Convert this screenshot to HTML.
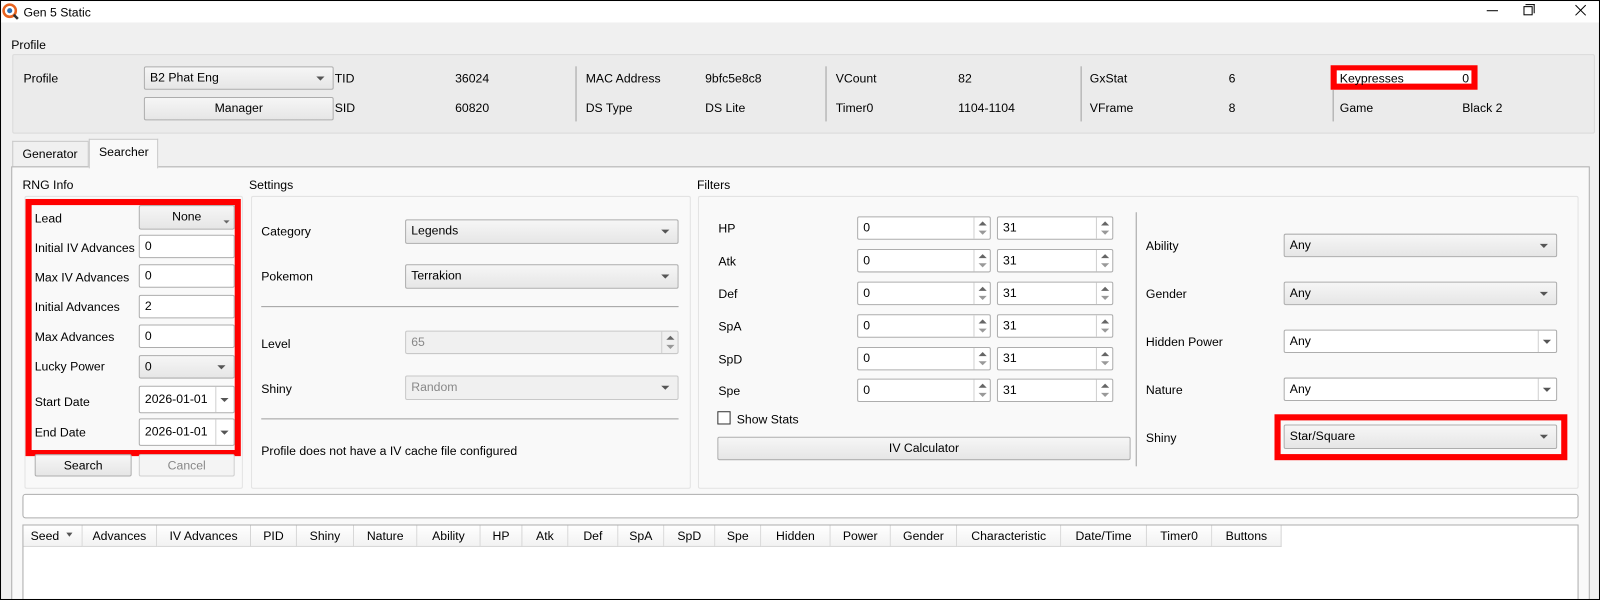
<!DOCTYPE html>
<html><head><meta charset="utf-8"><style>
*{box-sizing:border-box;margin:0;padding:0}
body{width:1600px;height:600px;position:relative;overflow:hidden;background:#f0f0f0;font-family:"Liberation Sans",sans-serif;font-size:12px;color:#000}
#s{position:absolute;left:0;top:0;width:1568px;height:588px;overflow:hidden;transform:scale(1.020408);transform-origin:0 0}
.a{position:absolute}
.t{position:absolute;line-height:14px;white-space:nowrap}
.cb{position:absolute;border:1px solid #adadad;border-radius:2px;background:linear-gradient(#f6f6f6,#e6e6e6);padding-left:5px;line-height:20px}
.cb:after{content:"";position:absolute;right:8px;top:50%;margin-top:-2px;border-left:4px solid transparent;border-right:4px solid transparent;border-top:4px solid #555}
.ed{position:absolute;border:1px solid #adadad;border-radius:2px;background:#fff;padding-left:5px;line-height:20px}
.ed.dd:before{content:"";position:absolute;right:17px;top:0;bottom:0;border-left:1px solid #d0d0d0}
.ed.dd:after{content:"";position:absolute;right:5px;top:50%;margin-top:-2px;border-left:4px solid transparent;border-right:4px solid transparent;border-top:4px solid #555}
.sp{position:absolute;border:1px solid #adadad;border-radius:2px;background:#fff;padding-left:5px;line-height:20px}
.sp i{position:absolute;right:0;top:0;bottom:0;width:16px;border-left:1px solid #d0d0d0}
.sp i:before{content:"";position:absolute;left:4px;top:4px;border-left:4px solid transparent;border-right:4px solid transparent;border-bottom:4px solid #666}
.sp i:after{content:"";position:absolute;left:4px;bottom:4px;border-left:4px solid transparent;border-right:4px solid transparent;border-top:4px solid #999}
.bt{position:absolute;border:1px solid #adadad;border-radius:2px;background:linear-gradient(#f6f6f6,#e6e6e6);text-align:center;line-height:20px}
.gb{position:absolute;border:1px solid #e3e3e3;border-radius:2px}
.vs{position:absolute;width:1px;background:#a0a0a0}
.hr{position:absolute;height:1px;background:#a0a0a0}
.red{position:absolute;border:6px solid #f00}
.th{position:absolute;top:0;height:21px;line-height:20px;text-align:center;border-right:1px solid #d5d5d5;border-bottom:1px solid #d5d5d5;background:linear-gradient(#fff,#f2f2f2)}
</style></head><body><div id="s">
<div class="a" style="left:0;top:0;width:1568px;height:22px;background:#fff"></div>
<svg class="a" style="left:2px;top:3px" width="17" height="17" viewBox="0 0 17 17"><circle cx="7.5" cy="7.5" r="6" fill="#fff" stroke="#e8631f" stroke-width="2.5"/><circle cx="7.5" cy="7.5" r="2.5" fill="#2a6fb5"/><line x1="11.5" y1="11.5" x2="15.5" y2="15.5" stroke="#333" stroke-width="2.5"/></svg>
<div class="t" style="left:23px;top:5px">Gen 5 Static</div>
<div class="a" style="left:1457px;top:10px;width:11px;height:1px;background:#000"></div>
<div class="a" style="left:1493px;top:6px;width:9px;height:9px;border:1px solid #000;background:#fff"></div>
<div class="a" style="left:1495px;top:4px;width:9px;height:9px;border-top:1px solid #000;border-right:1px solid #000"></div>
<svg class="a" style="left:1543px;top:4px" width="12" height="12"><path d="M1 1L11 11M11 1L1 11" stroke="#000" stroke-width="1"/></svg>

<div class="t" style="left:11px;top:37px">Profile</div>
<div class="gb" style="left:12px;top:53px;width:1551px;height:78px;background:#ebebeb;border-color:#dadada"></div>
<div class="t" style="left:23px;top:70px">Profile</div>
<div class="cb" style="left:141px;top:65px;width:186px;height:23px">B2 Phat Eng</div>
<div class="bt" style="left:141px;top:95px;width:186px;height:23px">Manager</div>
<div class="t" style="left:328px;top:70px">TID</div><div class="t" style="left:446px;top:70px">36024</div>
<div class="t" style="left:328px;top:99px">SID</div><div class="t" style="left:446px;top:99px">60820</div>
<div class="vs" style="left:564px;top:65px;height:54px"></div>
<div class="t" style="left:574px;top:70px">MAC Address</div><div class="t" style="left:691px;top:70px">9bfc5e8c8</div>
<div class="t" style="left:574px;top:99px">DS Type</div><div class="t" style="left:691px;top:99px">DS Lite</div>
<div class="vs" style="left:809px;top:65px;height:54px"></div>
<div class="t" style="left:819px;top:70px">VCount</div><div class="t" style="left:939px;top:70px">82</div>
<div class="t" style="left:819px;top:99px">Timer0</div><div class="t" style="left:939px;top:99px">1104-1104</div>
<div class="vs" style="left:1059px;top:65px;height:54px"></div>
<div class="t" style="left:1068px;top:70px">GxStat</div><div class="t" style="left:1204px;top:70px">6</div>
<div class="t" style="left:1068px;top:99px">VFrame</div><div class="t" style="left:1204px;top:99px">8</div>
<div class="vs" style="left:1306px;top:88px;height:31px"></div>
<div class="t" style="left:1313px;top:99px">Game</div><div class="t" style="left:1433px;top:99px">Black 2</div>
<div class="a" style="left:1304px;top:64px;width:144px;height:24px;border:5px solid #f00;border-width:5px 6px 6px 6px;background:#fff"></div>
<div class="t" style="left:1313px;top:70px">Keypresses</div><div class="t" style="left:1433px;top:70px">0</div>

<div class="a" style="left:12px;top:138px;width:75px;height:25px;border:1px solid #c8c8c8;border-bottom:none;background:#f0f0f0"></div>
<div class="t" style="left:22px;top:144px">Generator</div>
<div class="a" style="left:11px;top:163px;width:1547px;height:440px;border:1px solid #adadad;background:#f9f9f9"></div>
<div class="a" style="left:87px;top:136px;width:68px;height:29px;border:1px solid #c8c8c8;border-bottom:none;background:#f9f9f9"></div>
<div class="t" style="left:97px;top:142px">Searcher</div>

<div class="t" style="left:22px;top:174px">RNG Info</div>
<div class="gb" style="left:24px;top:192px;width:214px;height:287px"></div>
<div class="red" style="left:25px;top:195px;width:211px;height:252px"></div>
<div class="t" style="left:34px;top:207px">Lead</div>
<div class="bt" style="left:136px;top:201px;width:94px;height:24px">None</div>
<div class="a" style="left:219px;top:216px;border-left:3px solid transparent;border-right:3px solid transparent;border-top:3px solid #666"></div>
<div class="t" style="left:34px;top:236px">Initial IV Advances</div><div class="ed" style="left:136px;top:230px;width:94px;height:23px">0</div>
<div class="t" style="left:34px;top:265px">Max IV Advances</div><div class="ed" style="left:136px;top:259px;width:94px;height:23px">0</div>
<div class="t" style="left:34px;top:294px">Initial Advances</div><div class="ed" style="left:136px;top:289px;width:94px;height:23px">2</div>
<div class="t" style="left:34px;top:323px">Max Advances</div><div class="ed" style="left:136px;top:318px;width:94px;height:23px">0</div>
<div class="t" style="left:34px;top:352px">Lucky Power</div><div class="cb" style="left:136px;top:348px;width:94px;height:23px">0</div>
<div class="t" style="left:34px;top:387px">Start Date</div><div class="ed dd" style="left:136px;top:378px;width:94px;height:27px;line-height:25px">2026-01-01</div>
<div class="t" style="left:34px;top:417px">End Date</div><div class="ed dd" style="left:136px;top:410px;width:94px;height:27px;line-height:25px">2026-01-01</div>
<div class="bt" style="left:34px;top:445px;width:95px;height:22px">Search</div>
<div class="bt" style="left:136px;top:445px;width:94px;height:22px;color:#888;background:#f4f4f4;border-color:#cfcfcf">Cancel</div>

<div class="t" style="left:244px;top:174px">Settings</div>
<div class="gb" style="left:246px;top:192px;width:431px;height:287px"></div>
<div class="t" style="left:256px;top:220px">Category</div><div class="cb" style="left:397px;top:215px;width:268px;height:24px">Legends</div>
<div class="t" style="left:256px;top:264px">Pokemon</div><div class="cb" style="left:397px;top:259px;width:268px;height:24px">Terrakion</div>
<div class="hr" style="left:256px;top:300px;width:409px"></div>
<div class="t" style="left:256px;top:330px">Level</div><div class="sp" style="left:397px;top:324px;width:268px;height:23px;background:#f0f0f0;color:#888;border-color:#c8c8c8">65<i></i></div>
<div class="t" style="left:256px;top:374px">Shiny</div><div class="cb" style="left:397px;top:368px;width:268px;height:24px;color:#888;background:#f0f0f0;border-color:#c8c8c8">Random</div>
<div class="hr" style="left:256px;top:410px;width:409px"></div>
<div class="t" style="left:256px;top:435px">Profile does not have a IV cache file configured</div>

<div class="t" style="left:683px;top:174px">Filters</div>
<div class="gb" style="left:684px;top:192px;width:863px;height:287px"></div>
<div class="t" style="left:704px;top:217px">HP</div><div class="sp" style="left:840px;top:212px;width:131px;height:23px">0<i></i></div><div class="sp" style="left:977px;top:212px;width:114px;height:23px">31<i></i></div>
<div class="t" style="left:704px;top:249px">Atk</div><div class="sp" style="left:840px;top:244px;width:131px;height:23px">0<i></i></div><div class="sp" style="left:977px;top:244px;width:114px;height:23px">31<i></i></div>
<div class="t" style="left:704px;top:281px">Def</div><div class="sp" style="left:840px;top:276px;width:131px;height:23px">0<i></i></div><div class="sp" style="left:977px;top:276px;width:114px;height:23px">31<i></i></div>
<div class="t" style="left:704px;top:313px">SpA</div><div class="sp" style="left:840px;top:308px;width:131px;height:23px">0<i></i></div><div class="sp" style="left:977px;top:308px;width:114px;height:23px">31<i></i></div>
<div class="t" style="left:704px;top:345px">SpD</div><div class="sp" style="left:840px;top:340px;width:131px;height:23px">0<i></i></div><div class="sp" style="left:977px;top:340px;width:114px;height:23px">31<i></i></div>
<div class="t" style="left:704px;top:376px">Spe</div><div class="sp" style="left:840px;top:371px;width:131px;height:23px">0<i></i></div><div class="sp" style="left:977px;top:371px;width:114px;height:23px">31<i></i></div>
<div class="a" style="left:703px;top:403px;width:13px;height:13px;border:1px solid #333;background:#fff"></div>
<div class="t" style="left:722px;top:404px">Show Stats</div>
<div class="bt" style="left:703px;top:428px;width:405px;height:23px">IV Calculator</div>
<div class="vs" style="left:1113px;top:208px;height:249px"></div>
<div class="t" style="left:1123px;top:234px">Ability</div><div class="cb" style="left:1258px;top:229px;width:268px;height:23px">Any</div>
<div class="t" style="left:1123px;top:281px">Gender</div><div class="cb" style="left:1258px;top:276px;width:268px;height:23px">Any</div>
<div class="t" style="left:1123px;top:328px">Hidden Power</div><div class="ed dd" style="left:1258px;top:323px;width:268px;height:23px">Any</div>
<div class="t" style="left:1123px;top:375px">Nature</div><div class="ed dd" style="left:1258px;top:370px;width:268px;height:23px">Any</div>
<div class="t" style="left:1123px;top:422px">Shiny</div>
<div class="red" style="left:1249px;top:406px;width:287px;height:45px"></div>
<div class="cb" style="left:1258px;top:416px;width:268px;height:24px">Star/Square</div>

<div class="a" style="left:22px;top:484px;width:1525px;height:24px;border:1px solid #adadad;border-radius:3px;background:#fff"></div>

<div class="a" style="left:22px;top:514px;width:1525px;height:90px;border:1px solid #adadad;background:#fff">
<div class="th" style="left:0;width:58px;text-align:left;padding-left:7px">Seed</div>
<div class="a" style="left:42px;top:7px;border-left:3px solid transparent;border-right:3px solid transparent;border-top:4px solid #555"></div>
<div class="th" style="left:58px;width:73px">Advances</div>
<div class="th" style="left:131px;width:92px">IV Advances</div>
<div class="th" style="left:223px;width:45px">PID</div>
<div class="th" style="left:268px;width:56px">Shiny</div>
<div class="th" style="left:324px;width:62px">Nature</div>
<div class="th" style="left:386px;width:62px">Ability</div>
<div class="th" style="left:448px;width:41px">HP</div>
<div class="th" style="left:489px;width:45px">Atk</div>
<div class="th" style="left:534px;width:49px">Def</div>
<div class="th" style="left:583px;width:45px">SpA</div>
<div class="th" style="left:628px;width:50px">SpD</div>
<div class="th" style="left:678px;width:45px">Spe</div>
<div class="th" style="left:723px;width:68px">Hidden</div>
<div class="th" style="left:791px;width:59px">Power</div>
<div class="th" style="left:850px;width:65px">Gender</div>
<div class="th" style="left:915px;width:102px">Characteristic</div>
<div class="th" style="left:1017px;width:84px">Date/Time</div>
<div class="th" style="left:1101px;width:64px">Timer0</div>
<div class="th" style="left:1165px;width:68px">Buttons</div>
</div>
<div class="a" style="left:0;top:0;width:1px;height:588px;background:#000"></div>
<div class="a" style="left:1567px;top:0;width:1px;height:588px;background:#000"></div>
<div class="a" style="left:0;top:0;width:1568px;height:1px;background:#000"></div>
<div class="a" style="left:0;top:587px;width:1568px;height:1px;background:#000"></div>
</div></body></html>
